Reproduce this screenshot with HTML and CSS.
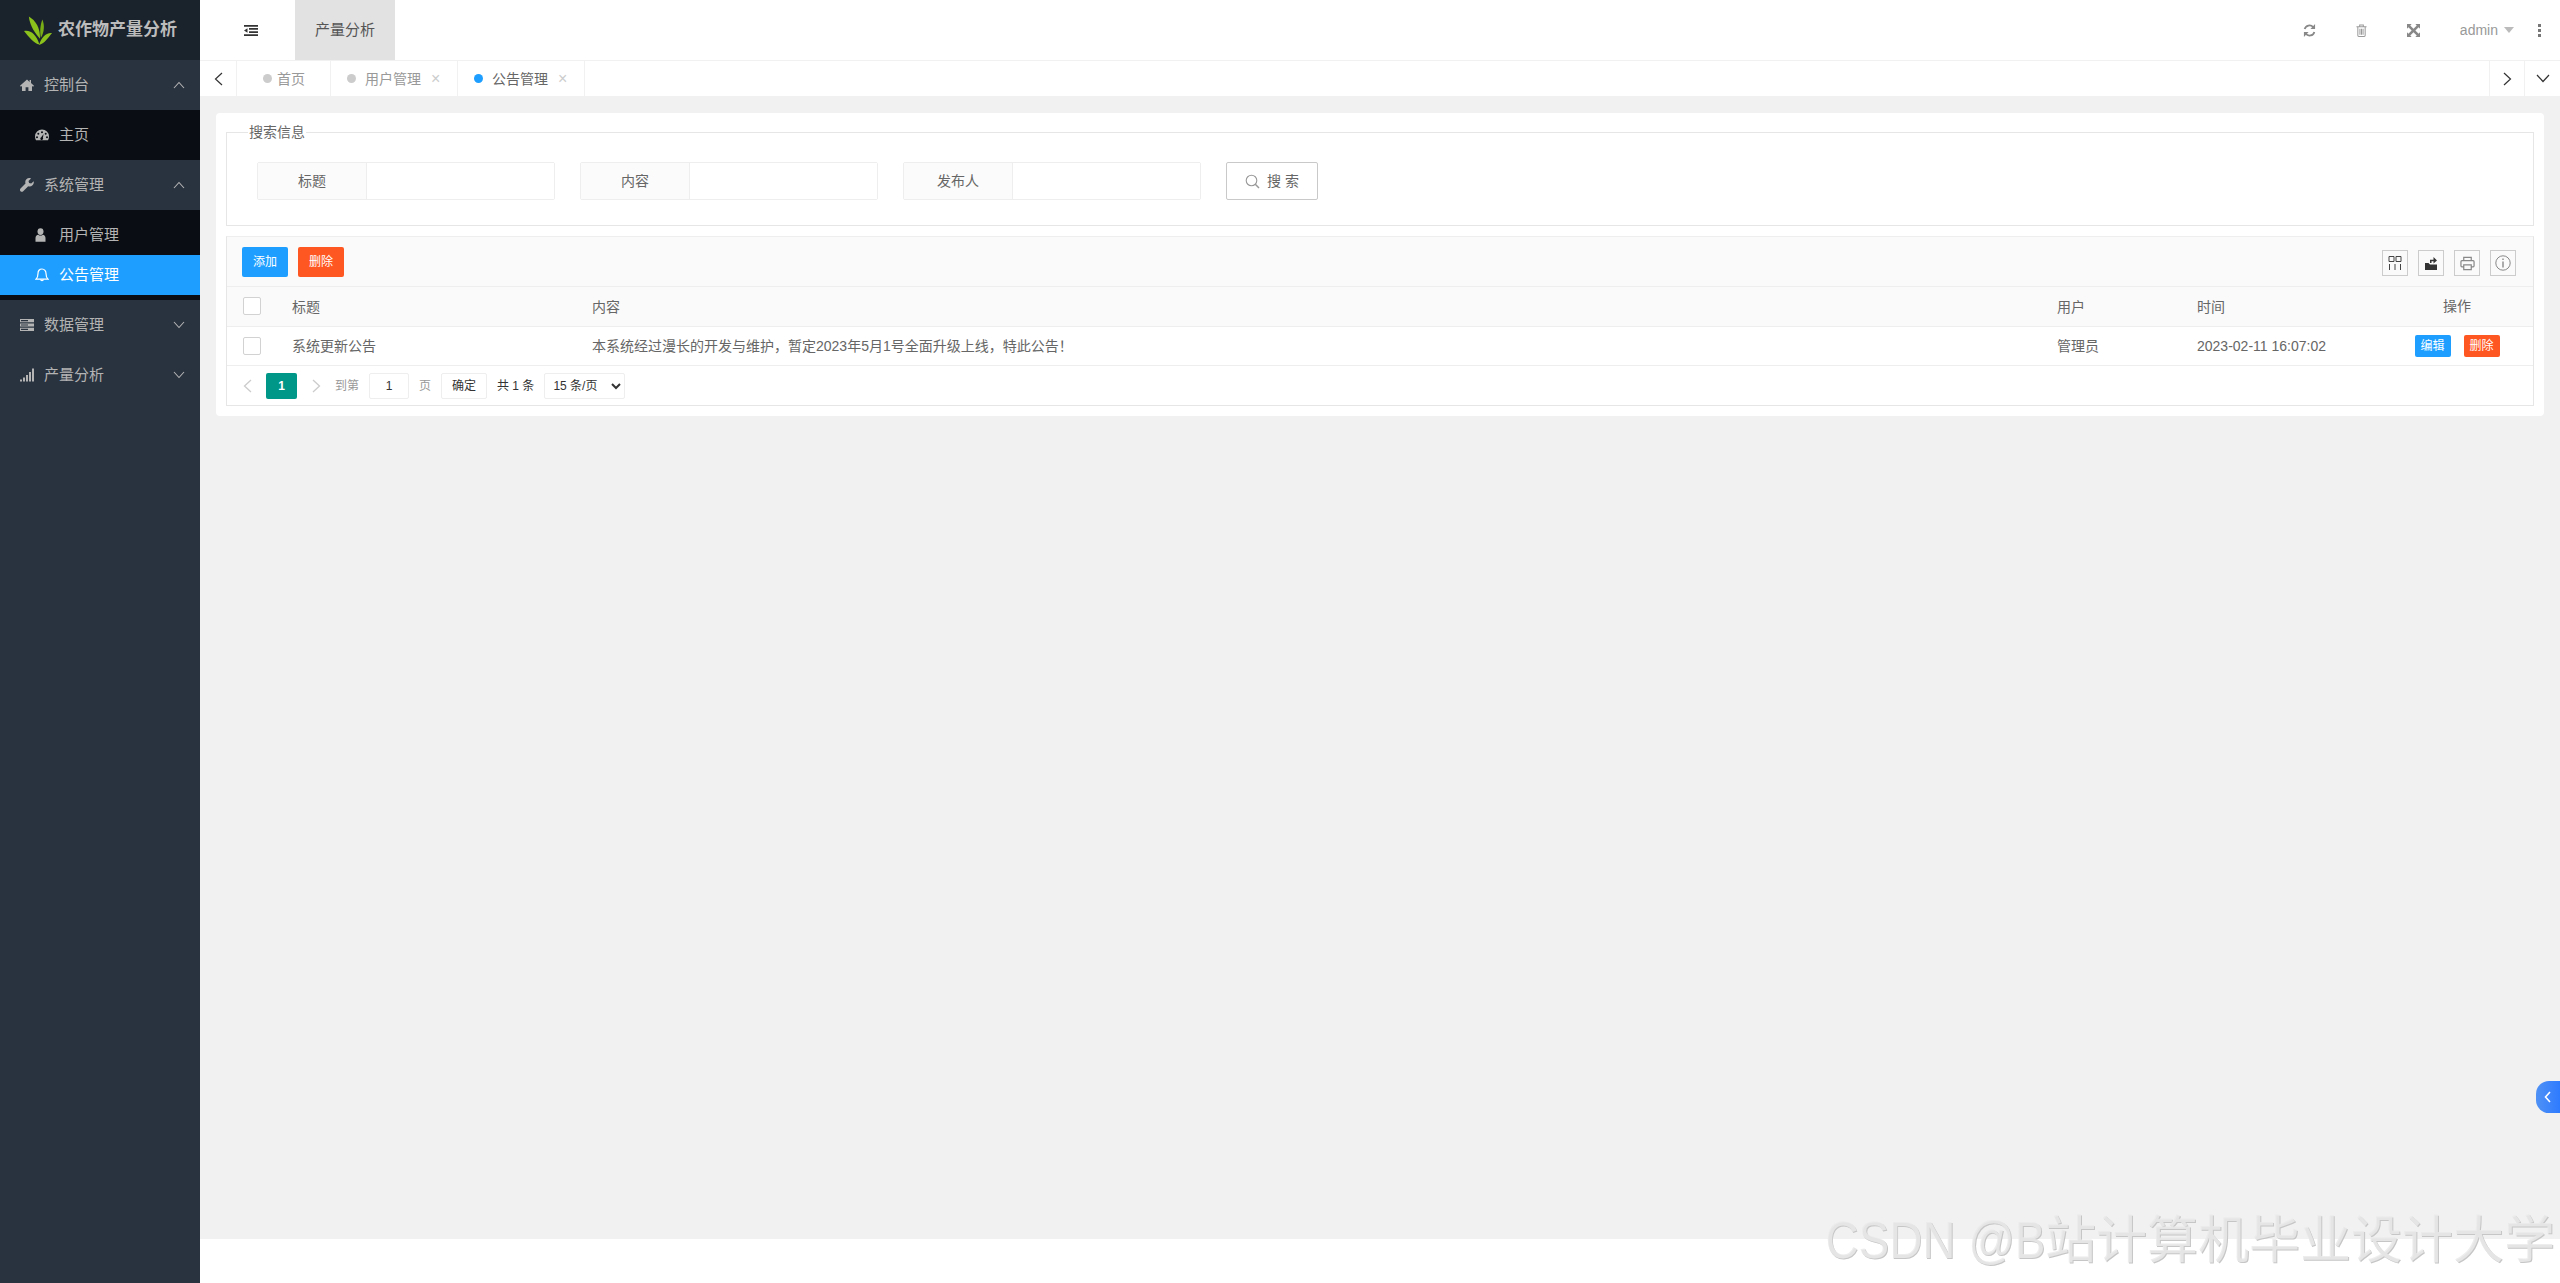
FILE: index.html
```html
<!DOCTYPE html>
<html lang="zh-CN">
<head>
<meta charset="utf-8">
<title>农作物产量分析</title>
<link rel="stylesheet" href="styles.css">
</head>
<body>
<div class="app">
  <aside class="side">
    <div class="logo">
      <svg class="logo-mark" viewBox="0 0 30 30" width="29" height="30"><path fill="#8cc21c" d="M5 0C12 4 17 12 16.500 23C12 18 6 10 5 0Z"/><path fill="#79ad16" d="M19 3C21.500 9 21 16 17.500 22C16 15 17 8 19 3Z"/><path fill="#8cc21c" d="M0 15C7 13.500 13 19 16 29C10 28 5 21 0 15Z"/><path fill="#8cc21c" d="M29 17C22 16.500 18 22 15.500 29.500C21 28 25 22 29 17Z"/></svg>
      <span class="logo-text">农作物产量分析</span>
    </div>
    <div class="nav-head"><svg class="nav-ic" viewBox="0 0 14 14"><path fill="currentColor" d="M7 1.500L0 7.800l.9 1L2 7.900V13h3.600V9.200h2.800V13H12V7.900l1.100.9.900-1-3-2.700V2H9.600v1.900z"/></svg><span>控制台</span><svg class="chev" viewBox="0 0 12 8"><path d="M1 7l5-5.500L11 7"/></svg></div>
    <div class="sub">
      <div class="sub-item"><svg class="sub-ic" viewBox="0 0 14 14"><path fill="currentColor" fill-rule="evenodd" d="M7 1.500a7 7 0 0 1 7 7c0 1.500-.4 2.800-1 3.800H1c-.6-1-1-2.300-1-3.800a7 7 0 0 1 7-7zM7 3.200a1 1 0 1 0 0 2 1 1 0 0 0 0-2zM3.300 4.800a1 1 0 1 0 0 2 1 1 0 0 0 0-2zM10.700 4.800a1 1 0 1 0 0 2 1 1 0 0 0 0-2zM2 8.300a1 1 0 1 0 0 2 1 1 0 0 0 0-2zM12 8.300a1 1 0 1 0 0 2 1 1 0 0 0 0-2zM8.600 6L6.200 9.300a1.400 1.400 0 1 0 1.700.5z"/></svg><span>主页</span></div>
    </div>
    <div class="nav-head"><svg class="nav-ic" viewBox="0 0 14 14"><path fill="currentColor" d="M13.700 3.200l-2.500 2.400-2.100-.6-.6-2.100L11 .4C9.400-.3 7.600 0 6.400 1.200 5.200 2.400 5 4.100 5.500 5.500L.5 10.500c-.7.700-.7 1.900 0 2.700.8.700 2 .7 2.700 0l5-5c1.400.5 3.100.2 4.300-1 1.200-1.200 1.500-2.500 1.200-4z"/></svg><span>系统管理</span><svg class="chev" viewBox="0 0 12 8"><path d="M1 7l5-5.500L11 7"/></svg></div>
    <div class="sub">
      <div class="sub-item"><svg class="sub-ic" viewBox="0 0 14 14"><g fill="currentColor"><ellipse cx="5.500" cy="3.600" rx="3" ry="3.400"/><path d="M.5 13.800V10c0-2 1.200-3 2.700-3.300.6.600 1.400.9 2.300.9s1.700-.3 2.300-.9C9.300 7 10.500 8 10.500 10v3.800z"/></g></svg><span>用户管理</span></div>
      <div class="sub-item active"><svg class="sub-ic" viewBox="0 0 14 14"><path fill="none" stroke="currentColor" stroke-width="1.200" d="M7 1C4.500 1 3 3 3 5.500 3 8.500 2.200 10 1 11.200h12C11.800 10 11 8.500 11 5.500 11 3 9.500 1 7 1z"/><path fill="none" stroke="currentColor" stroke-width="1.200" d="M5.500 11.500a1.600 1.600 0 0 0 3 0"/></svg><span>公告管理</span></div>
    </div>
    <div class="nav-head"><svg class="nav-ic wide" viewBox="0 0 14 12"><path fill="currentColor" d="M0 0h14v3.200H0zM0 4.400h14v3.200H0zM0 8.800h14V12H0z"/><path fill="#29333f" d="M1 1h7v1.200H1zM1 5.400h7v1.200H1zM1 9.800h7V11H1z"/></svg><span>数据管理</span><svg class="chev" viewBox="0 0 12 8"><path d="M1 1l5 5.500L11 1"/></svg></div>
    <div class="nav-head"><svg class="nav-ic wide" viewBox="0 0 14 13"><path fill="currentColor" d="M0 11h2v2H0zM3 9h2v4H3zM6 6.500h2V13H6zM9 3.500h2V13H9zM12 0h2v13h-2z"/></svg><span>产量分析</span><svg class="chev" viewBox="0 0 12 8"><path d="M1 1l5 5.500L11 1"/></svg></div>
  </aside>

  <div class="main">
    <header class="top">
      <div class="fold"><svg viewBox="0 0 14 11" width="14" height="11"><path fill="#333" d="M0 0h14v1.700H0zM5 3h9v1.700H5zM5 6.200h9v1.700H5zM0 9.300h14V11H0zM3.500 3.200v4.600L0 5.500z"/></svg></div>
      <div class="top-tab">产量分析</div>
      <div class="top-right">
        <div class="hicon"><svg viewBox="0 0 14 14" width="13" height="13"><g fill="none" stroke="#888" stroke-width="2"><path d="M1.800 5.500A5.300 5.300 0 0 1 11 3.500"/><path d="M12.200 8.500A5.300 5.300 0 0 1 3 10.500"/></g><path fill="#888" d="M13 0v5.500H8zM1 14V8.500h5z"/></svg></div>
        <div class="hicon"><svg viewBox="0 0 12 14" width="11" height="13"><g fill="none" stroke="#999" stroke-width="1.100"><path d="M.5 3h11M2 3v9.500a1 1 0 0 0 1 1h6a1 1 0 0 0 1-1V3M4 3V1h4v2M4.300 5v6.500M6 5v6.500M7.700 5v6.500"/></g></svg></div>
        <div class="hicon"><svg viewBox="0 0 14 14" width="13" height="13"><path fill="#888" d="M0 0h5L3.500 1.500 7 5l3.500-3.500L9 0h5v5l-1.500-1.500L9 7l3.500 3.500L14 9v5H9l1.500-1.500L7 9l-3.500 3.500L5 14H0V9l1.500 1.500L5 7 1.500 3.500 0 5z"/></svg></div>
        <span class="admin">admin</span><span class="caret"></span>
        <div class="dots"><i></i><i></i><i></i></div>
      </div>
    </header>

    <nav class="tabs">
      <div class="tab-btn"><svg viewBox="0 0 9 14" width="9" height="14"><path d="M8 1L1.500 7 8 13"/></svg></div>
      <div class="tab first"><i class="dot"></i><span>首页</span></div>
      <div class="tab"><i class="dot"></i><span>用户管理</span><b class="x">×</b></div>
      <div class="tab on"><i class="dot"></i><span>公告管理</span><b class="x">×</b></div>
      <div class="tab-btn push"><svg viewBox="0 0 9 14" width="9" height="14"><path d="M1 1l6.500 6L1 13"/></svg></div>
      <div class="tab-btn last"><svg viewBox="0 0 14 9" width="14" height="9"><path d="M1 1l6 6.500L13 1"/></svg></div>
    </nav>

    <main class="body">
      <section class="card">
        <fieldset class="search">
          <legend>搜索信息</legend>
          <div class="search-row">
            <div class="field"><label>标题</label><div class="inp"></div></div>
            <div class="field"><label>内容</label><div class="inp"></div></div>
            <div class="field"><label>发布人</label><div class="inp"></div></div>
            <div class="sbtn"><svg viewBox="0 0 15 15" width="15" height="15"><circle cx="6.500" cy="6.500" r="5.300" fill="none" stroke="#999" stroke-width="1.100"/><path d="M10.300 10.300L14 14" stroke="#999" stroke-width="1.500"/></svg><span>搜 索</span></div>
          </div>
        </fieldset>

        <div class="grid">
          <div class="tools">
            <span class="btn blue">添加</span>
            <span class="btn red">删除</span>
            <div class="tool-right">
              <span class="tool"><svg viewBox="0 0 14 14" width="14" height="14"><g fill="none" stroke="#444" stroke-width="1"><path d="M1 .5h5v5H1zM8 .5h5v5H8zM1.500 8v6M7 8v6M12.500 8v6"/></g></svg></span>
              <span class="tool"><svg viewBox="0 0 14 14" width="14" height="14"><path fill="#333" d="M1 7h3.500L6 8.500h7V14H1z"/><path fill="#333" d="M6 7V3.700h3.500V1L13 4.500 9.500 7.500V5.200H7.500V7z"/></svg></span>
              <span class="tool"><svg viewBox="0 0 16 16" width="15" height="15"><g fill="none" stroke="#888" stroke-width="1.300"><path d="M4 5V1.500h8V5M4 11.500H2a1 1 0 0 1-1-1V6a1 1 0 0 1 1-1h12a1 1 0 0 1 1 1v4.500a1 1 0 0 1-1 1h-2M4 9.500h8v5H4z"/></g></svg></span>
              <span class="tool"><svg viewBox="0 0 16 16" width="16" height="16"><circle cx="8" cy="8" r="7.200" fill="none" stroke="#888" stroke-width="1"/><path fill="#888" d="M7.300 3.500h1.400v1.500H7.300zM7.300 6.500h1.400v6H7.300z"/></svg></span>
            </div>
          </div>
          <table class="tbl">
            <colgroup><col class="c1"><col class="c2"><col class="c3"><col class="c4"><col class="c5"><col class="c6"></colgroup>
            <thead>
              <tr><th><i class="ck"></i></th><th>标题</th><th>内容</th><th>用户</th><th>时间</th><th class="mid">操作</th></tr>
            </thead>
            <tbody>
              <tr><td><i class="ck"></i></td><td>系统更新公告</td><td>本系统经过漫长的开发与维护，暂定2023年5月1号全面升级上线，特此公告！</td><td>管理员</td><td>2023-02-11 16:07:02</td><td class="mid"><span class="mini blue">编辑</span><span class="mini red">删除</span></td></tr>
            </tbody>
          </table>
          <div class="pager">
            <svg class="parrow" viewBox="0 0 9 14" width="9" height="14"><path d="M8 1L1.500 7 8 13"/></svg>
            <span class="pcur">1</span>
            <svg class="parrow next" viewBox="0 0 9 14" width="9" height="14"><path d="M1 1l6.500 6L1 13"/></svg>
            <span class="pmuted to">到第</span>
            <span class="pbox pinput">1</span>
            <span class="pmuted page">页</span>
            <span class="pbox pok">确定</span>
            <span class="ptotal">共 1 条</span>
            <select class="psel"><option>15 条/页</option></select>
          </div>
        </div>
      </section>
    </main>
    <footer class="foot"></footer>
  </div>
</div>
<div class="pill"><svg viewBox="0 0 7 12" width="7" height="12"><path d="M6 1L1.500 6 6 11"/></svg></div>
<div class="mark"><span class="mark-l">CSDN @B</span>站计算机毕业设计大学</div>
</body>
</html>
```

FILE: styles.css
```css
* { box-sizing: border-box; }
html, body { margin: 0; padding: 0; }
body {
  width: 2560px;
  height: 1283px;
  overflow: hidden;
  position: relative;
  font: 14px/20px "Liberation Sans", "Noto Sans CJK SC", sans-serif;
  color: #666;
  background: #fff;
}
i, b { font-style: normal; font-weight: normal; }
svg { display: block; flex: none; }

.app { display: flex; height: 100%; }

/* sidebar */
.side { width: 200px; flex: none; background: #29333f; color: #b4b4b4; font-size: 15px; }
.logo { height: 60px; background: #1a222c; display: flex; align-items: center; padding-left: 24px; }
.logo-mark { margin-top: 2px; }
.logo-text { margin-left: 5px; font-size: 17px; font-weight: bold; color: #bcbcbc; white-space: nowrap; }
.nav-head { height: 50px; display: flex; align-items: center; padding-left: 20px; padding-right: 15px; }
.nav-ic { width: 14px; height: 14px; margin-right: 10px; }
.chev { width: 12px; height: 8px; margin-left: auto; }
.chev path { fill: none; stroke: #b4b4b4; stroke-width: 1.100; }
.sub { background: #0a0e14; padding: 5px 0; }
.sub-item { height: 40px; display: flex; align-items: center; padding-left: 35px; }
.sub-ic { width: 14px; height: 14px; margin-right: 10px; }
.sub-item.active { background: #1e9fff; color: #fff; }

/* main */
.main { flex: 1; display: flex; flex-direction: column; min-width: 0; }
.top { height: 60px; display: flex; align-items: stretch; flex: none; }
.fold { width: 95px; display: flex; align-items: center; padding-left: 44px; }
.top-tab { width: 100px; background: #e2e2e2; color: #555; font-size: 15px; display: flex; align-items: center; justify-content: center; }
.top-right { margin-left: auto; display: flex; align-items: center; padding-right: 19px; color: #999; }
.hicon { width: 52px; display: flex; justify-content: center; }
.admin { margin-left: 20px; }
.caret { margin-left: 6px; width: 0; height: 0; border: 5.500px solid transparent; border-top: 6px solid #bbb; border-bottom: 0; }
.dots { margin-left: 24px; display: flex; flex-direction: column; gap: 2px; }
.dots i { width: 3px; height: 3px; background: #777; display: block; }

/* tabs */
.tabs { height: 36px; flex: none; display: flex; align-items: stretch; border-top: 1px solid #f1f1f1; background: #fff; color: #999; }
.tab-btn { width: 37px; border-right: 1px solid #f1f1f1; display: flex; align-items: center; justify-content: center; }
.tab-btn path { fill: none; stroke: #333; stroke-width: 1.200; }
.tab-btn.push { margin-left: auto; width: 36px; border-left: 1px solid #f1f1f1; border-right: 1px solid #f1f1f1; }
.tab-btn.last { width: 35px; border-right: 0; }
.tab { width: 127px; padding-left: 16px; border-right: 1px solid #f1f1f1; display: flex; align-items: center; }
.tab.first { width: 94px; padding-left: 26px; }
.dot { width: 9px; height: 9px; border-radius: 50%; background: #ccc; margin-right: 9px; }
.tab.first .dot { margin-right: 5px; }
.tab.on .dot { margin-right: 9px; }
.tab.on { color: #666; }
.tab.on .dot { background: #1e9fff; }
.x { margin-left: 10px; color: #ccc; font-size: 16px; }

/* body */
.body { flex: 1; background: #f1f1f1; padding: 17px 16px 0; min-height: 0; }
.foot { height: 44px; flex: none; background: #fff; }
.card { background: #fff; border-radius: 4px; padding: 10px; }

.search { margin: 0; padding: 21px 30px 25px; border: 1px solid #e6e6e6; min-width: 0; }
.search legend { padding: 0 1px; margin-left: -9px; line-height: 18px; color: #666; }
.search-row { display: flex; gap: 25px; }
.field { width: 298px; height: 38px; display: flex; border: 1px solid #eee; border-radius: 2px; }
.field label { width: 109px; background: #fbfbfb; border-right: 1px solid #eee; display: flex; align-items: center; justify-content: center; }
.inp { flex: 1; background: #fff; }
.sbtn { width: 92px; height: 38px; border: 1px solid #c9c9c9; border-radius: 2px; display: flex; align-items: center; justify-content: center; gap: 7px; color: #666; }

.grid { margin-top: 10px; border: 1px solid #e6e6e6; border-top-color: #eee; }
.tools { height: 50px; background: #fafafa; display: flex; align-items: flex-start; padding: 10px 17px 0 15px; border-bottom: 1px solid #eee; }
.btn { width: 46px; height: 30px; border-radius: 2px; font-size: 12px; color: #fff; display: flex; align-items: center; justify-content: center; margin-right: 10px; }
.blue { background: #1e9fff; }
.red { background: #ff5722; }
.tool-right { margin-left: auto; display: flex; gap: 10px; padding-top: 3px; }
.tool { width: 26px; height: 26px; border: 1px solid #ccc; display: flex; align-items: center; justify-content: center; }

.tbl { width: 2306px; table-layout: fixed; border-collapse: collapse; }
.c1 { width: 50px; } .c2 { width: 300px; } .c3 { width: 1465px; } .c4 { width: 140px; } .c5 { width: 199px; } .c6 { width: 152px; }
.tbl th, .tbl td { height: 39px; padding: 0 15px; font-weight: normal; text-align: left; border-bottom: 1px solid #eee; white-space: nowrap; }
.tbl th { background: #fafafa; padding-top: 1px; }
.tbl th:first-child, .tbl td:first-child { padding: 0 0 0 16px; }
.tbl .mid { text-align: center; padding: 0; }
.tbl td.mid { padding-right: 0; }
.ck { display: block; width: 18px; height: 18px; background: #fff; border: 1px solid #d2d2d2; border-radius: 2px; }
.mini { display: inline-block; width: 36px; height: 22px; line-height: 22px; border-radius: 2px; font-size: 12px; color: #fff; text-align: center; vertical-align: middle; }
.mini + .mini { margin-left: 13px; }

.pager { height: 39px; display: flex; align-items: center; padding-left: 16px; padding-top: 2px; font-size: 12px; }
.parrow { margin-right: 14px; }
.parrow path { fill: none; stroke: #ccc; stroke-width: 1.300; }
.parrow.next { margin-left: 15px; margin-right: 14px; }
.pcur { width: 31px; height: 26px; background: #009688; border-radius: 2px; color: #fff; font-weight: bold; display: flex; align-items: center; justify-content: center; }
.pmuted { color: #999; }
.pbox { height: 26px; border: 1px solid #eee; border-radius: 2px; color: #333; display: flex; align-items: center; justify-content: center; }
.pinput { width: 40px; margin-left: 10px; }
.page { margin-left: 10px; }
.pok { width: 46px; margin-left: 10px; }
.ptotal { margin-left: 10px; color: #333; white-space: nowrap; }
.psel { width: 81px; height: 26px; margin-left: 10px; border: 1px solid #eee; border-radius: 2px; background: #fff; color: #333; font: 12px "Liberation Sans", "Noto Sans CJK SC", sans-serif; padding-left: 4px; }

/* overlays */
.pill { position: absolute; right: 0; top: 1081px; width: 24px; height: 32px; border-radius: 13px 0 0 13px; background: linear-gradient(90deg, #4f91f5, #2e7bff); display: flex; align-items: center; padding-left: 8px; }
.pill path { fill: none; stroke: #fff; stroke-width: 1.600; }
.mark { position: absolute; right: 5px; top: 1211px; font-size: 51px; line-height: 60px; white-space: nowrap; color: rgba(234,234,234,.85); text-shadow: 1px 1px 0 #c6c6c6; }
.mark-l { display: inline-block; transform: scaleX(.9); transform-origin: right center; margin-left: -24px; }
```
